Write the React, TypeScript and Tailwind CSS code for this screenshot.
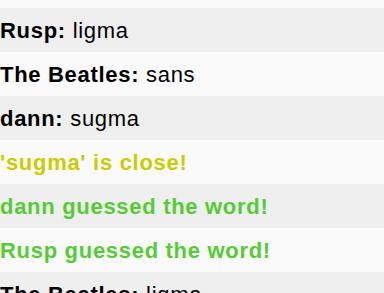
import React from 'react';

type Msg = { name?: string; text: string; kind?: 'close' | 'correct' };

const messages: Msg[] = [
  { name: 'dann', text: 'ligma' },
  { name: 'Rusp', text: 'ligma' },
  { name: 'The Beatles', text: 'sans' },
  { name: 'dann', text: 'sugma' },
  { text: "'sugma' is close!", kind: 'close' },
  { text: 'dann guessed the word!', kind: 'correct' },
  { text: 'Rusp guessed the word!', kind: 'correct' },
  { name: 'The Beatles', text: 'ligma' },
];

const App = () => {
  return (
    <div className="h-[293px] w-[384px] overflow-hidden bg-[#fafafa] font-['Liberation_Sans',Arial,sans-serif] text-[22px] tracking-[0.7px] text-black">
      <div className="-mt-[36px] flex flex-col">
        {messages.map((m, i) => (
          <div
            key={i}
            className={`flex h-[44px] items-center whitespace-nowrap ${i % 2 === 1 ? 'bg-[#efefef]' : 'bg-[#fafafa]'}`}
          >
            {m.kind === 'close' && <span className="font-bold text-[#cccc00]">{m.text}</span>}
            {m.kind === 'correct' && <span className="font-bold text-[#55cc33]">{m.text}</span>}
            {!m.kind && (
              <span>
                <b className="font-bold">{m.name}:</b> {m.text}
              </span>
            )}
          </div>
        ))}
      </div>
    </div>
  );
};

export default App;
